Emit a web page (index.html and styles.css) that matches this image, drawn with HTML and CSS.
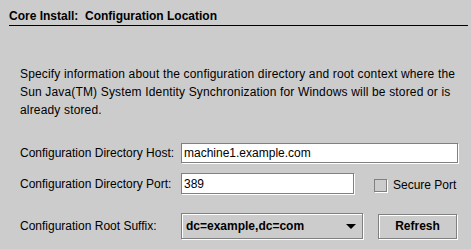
FILE: index.html
```html
<!DOCTYPE html>
<html lang="en">
<head>
  <meta charset="UTF-8">
  <title>Core Install: Configuration Location</title>
  <link rel="stylesheet" href="styles.css">
</head>
<body>
  <div class="panel">
    <div class="heading">
      <h1>Core Install:&nbsp; Configuration Location</h1>
    </div>

    <p class="intro">Specify information about the configuration directory and root context where the Sun Java(TM) System Identity Synchronization for Windows will be stored or is already stored.</p>

    <div class="form">
      <div class="row row-host">
        <label class="label" for="host">Configuration Directory Host:</label>
        <input class="field field-host" id="host" type="text" value="machine1.example.com">
      </div>

      <div class="row row-port">
        <label class="label" for="port">Configuration Directory Port:</label>
        <input class="field field-port" id="port" type="text" value="389">
        <label class="check">
          <span class="check-box"></span>
          <span>Secure Port</span>
        </label>
      </div>

      <div class="row row-suffix">
        <span class="label">Configuration Root Suffix:</span>
        <div class="combo">
          <span class="combo-text">dc=example,dc=com</span>
          <span class="combo-arrow"></span>
        </div>
        <button class="button">Refresh</button>
      </div>
    </div>
  </div>
</body>
</html>
```

FILE: styles.css
```css
html, body {
  margin: 0;
  padding: 0;
  background-color: #cccccc;
}

body {
  font-family: "Liberation Sans", Arial, sans-serif;
  font-size: 12px;
  color: #000000;
  width: 471px;
  height: 249px;
  overflow: hidden;
}

.panel {
  padding: 0 3px 0 9px;
}

.heading h1 {
  margin: 0;
  padding-top: 9px;
  height: 16px;
  line-height: 14px;
  font-size: 12px;
  font-weight: bold;
  border-bottom: 1px solid #000000;
}

.intro {
  margin: 0;
  padding: 39px 4px 0 11px;
  line-height: 18px;
  letter-spacing: 0.16px;
}

.form {
  padding-left: 11px;
  margin-top: 24px;
}

.row {
  display: flex;
  align-items: center;
}

.label {
  width: 161px;
  flex: none;
}

.field {
  box-sizing: border-box;
  font-family: inherit;
  font-size: 12px;
  color: #000000;
  background: #ffffff;
  border: 1px solid #808080;
  box-shadow: 1px 1px 0 #ffffff;
  padding: 0 2px;
  height: 20px;
  margin: 0;
  outline: none;
}

.field-host {
  width: 277px;
}

.row-port {
  margin-top: 10px;
}

.field-port {
  width: 173px;
  height: 21px;
}

.check {
  display: flex;
  align-items: center;
  gap: 6px;
  margin-left: 20px;
  margin-top: 3px;
}

.check-box {
  width: 11px;
  height: 11px;
  border: 1px solid #808080;
  box-shadow: 1px 1px 0 #ffffff;
}

.row-suffix {
  margin-top: 19px;
}

.combo {
  box-sizing: border-box;
  width: 182px;
  height: 26px;
  display: flex;
  align-items: center;
  justify-content: space-between;
  padding: 0 6px 0 4px;
  border: 1px solid #808080;
  box-shadow: inset 1px 1px 0 #ffffff, 1px 1px 0 #ffffff;
  font-weight: bold;
}

.combo-arrow {
  width: 0;
  height: 0;
  border-left: 5px solid transparent;
  border-right: 5px solid transparent;
  border-top: 5px solid #000000;
  margin-top: 1px;
}

.button {
  box-sizing: border-box;
  width: 79px;
  height: 25px;
  margin-left: 15px;
  font-family: inherit;
  font-size: 12px;
  font-weight: bold;
  color: #000000;
  background: #cccccc;
  border: 1px solid #808080;
  box-shadow: inset 1px 1px 0 #ffffff, 1px 1px 0 #ffffff;
  padding: 0;
}
```
